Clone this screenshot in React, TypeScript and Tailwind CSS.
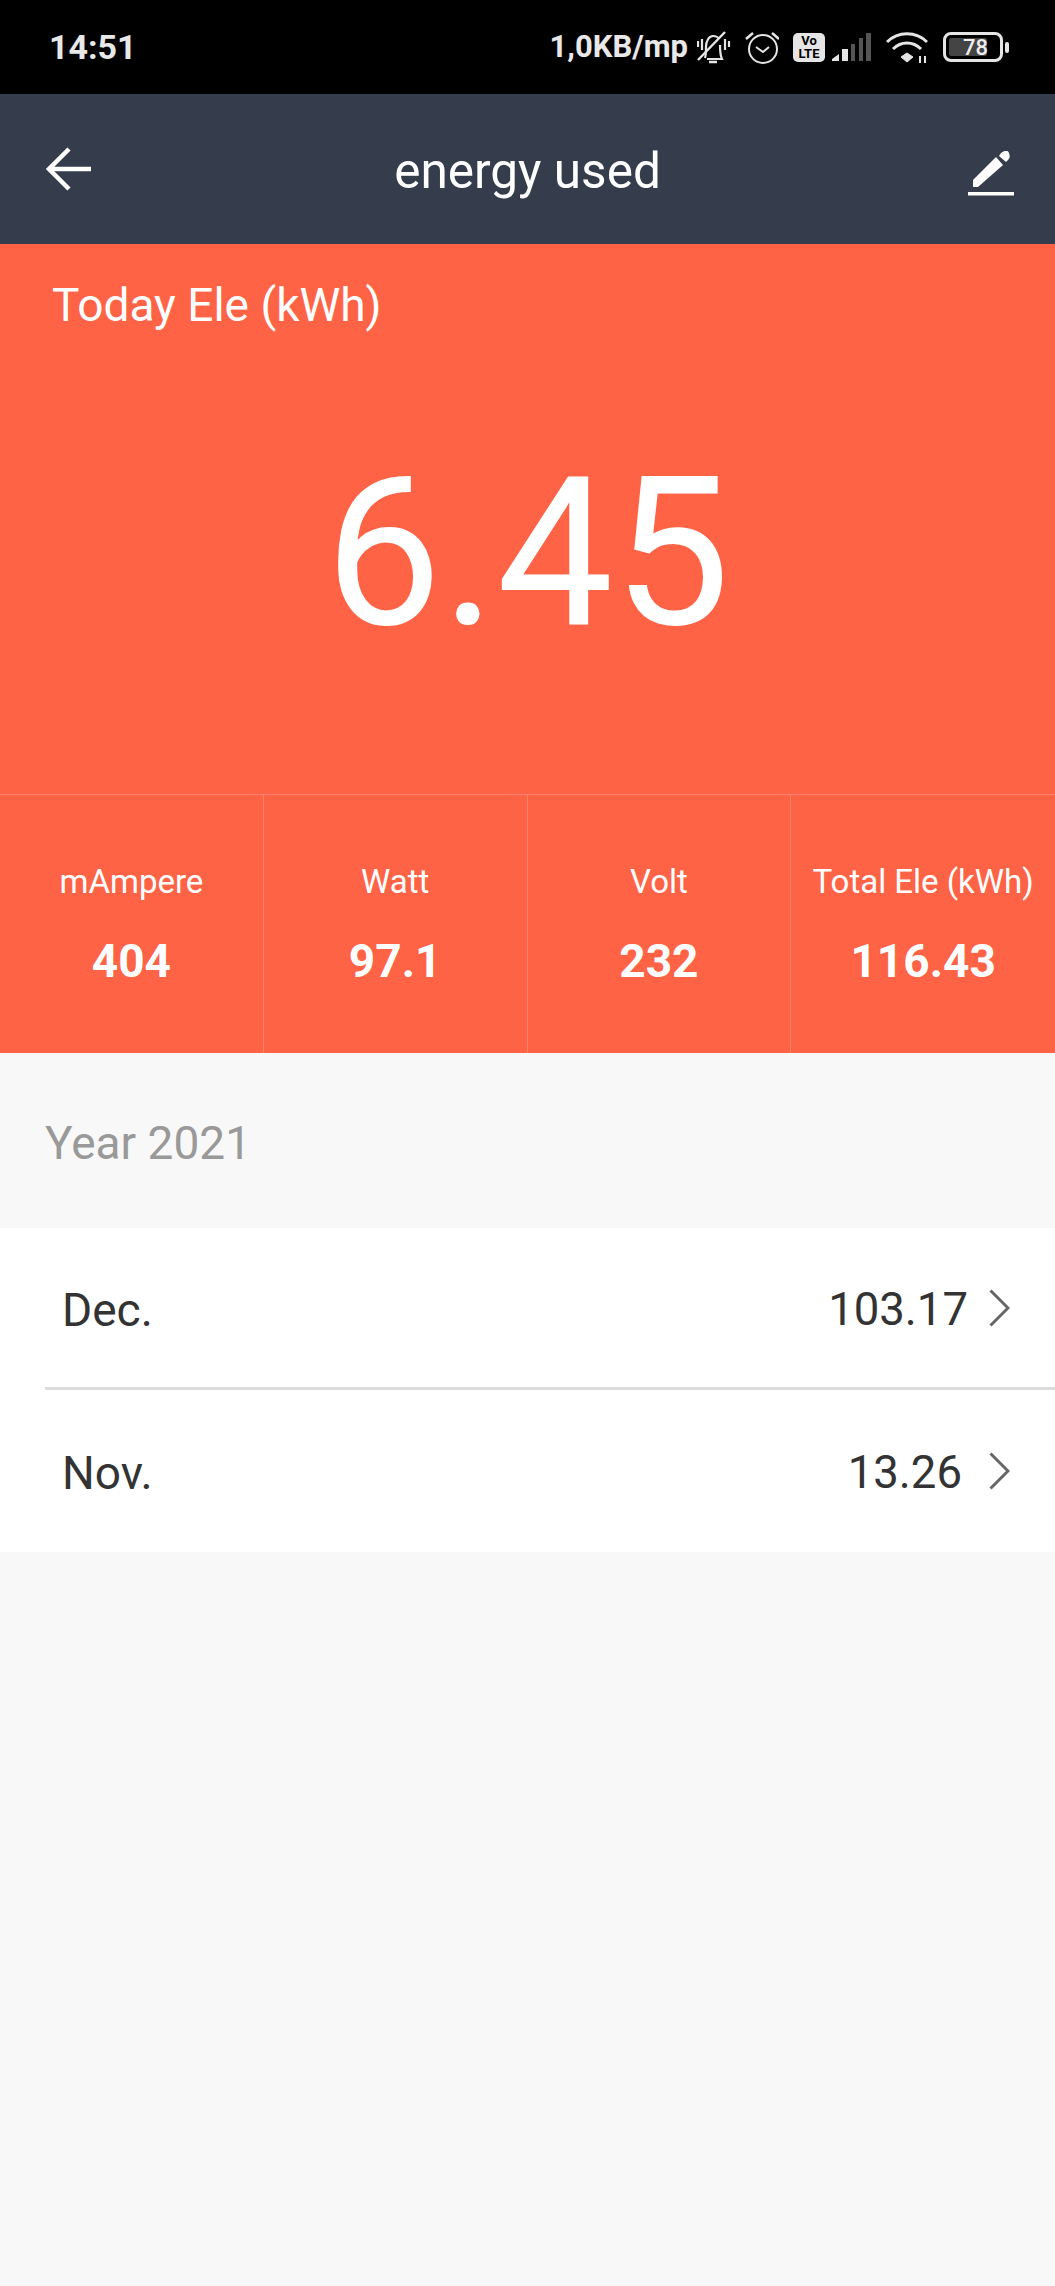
import React from 'react';

const stats = [
  { label: 'mAmpere', value: '404' },
  { label: 'Watt', value: '97.1' },
  { label: 'Volt', value: '232' },
  { label: 'Total Ele (kWh)', value: '116.43' },
];

const months = [
  { name: 'Dec.', value: '103.17', valueClass: 'mr-[21px]' },
  { name: 'Nov.', value: '13.26', valueClass: 'mr-[27px]' },
];

const BellOff = () => (
  <svg width="34" height="33" viewBox="0 0 34 33" fill="none" stroke="#e5e5e5" strokeWidth="2.2">
    <path d="M8 27c1-3 1-7 1-11 0-6 3-11 7-11 3 0 5 1 6 3M23 14c0 5 0 10 2 14H10" />
    <path d="M12 31h8" strokeWidth="2.5" />
    <path d="M1 29 28 1" strokeWidth="2.4" />
    <path d="M5 8v11M1 10v6M28 8v11M32 10v6" />
  </svg>
);

const Alarm = () => (
  <svg width="34" height="33" viewBox="0 0 34 33" fill="none" stroke="#e5e5e5" strokeWidth="2">
    <circle cx="18" cy="18" r="14" />
    <path d="M11 16l7 5 6-5" />
    <path d="M1 8l7-6M27 2l7 6" strokeWidth="2.5" />
  </svg>
);

const Signal = () => (
  <svg width="39" height="28" viewBox="0 0 39 28">
    <path d="M0 28v-2l7-5v7z" fill="#e5e5e5" />
    <rect x="10" y="16" width="6" height="12" fill="#e5e5e5" />
    <rect x="19" y="11" width="4" height="17" fill="#555" />
    <rect x="27" y="5" width="4" height="23" fill="#555" />
    <rect x="34" y="0" width="5" height="28" fill="#555" />
  </svg>
);

const Wifi = () => (
  <svg width="42" height="32" viewBox="0 0 42 32" fill="none" stroke="#e5e5e5" strokeWidth="3">
    <path d="M1 11c11-11 29-11 40 0" />
    <path d="M7 18c8-8 20-8 28 0" />
    <path d="M15 26l6-4 6 4-6 5z" fill="#e5e5e5" strokeWidth="1" />
    <path d="M34 25v7M39 25v7" strokeWidth="2" />
  </svg>
);

const BackArrow = () => (
  <svg width="48" height="48" viewBox="0 0 48 48" fill="none" stroke="white" strokeWidth="4.5">
    <path d="M47 24H5" />
    <path d="M25 4 5 24l20 20" />
  </svg>
);

const EditIcon = () => (
  <svg width="46" height="46" viewBox="0 0 46 46" fill="white">
    <path d="M5 29 28 6l7 8-25 22H5z" />
    <path d="M31 5l2-3c4-3 7-3 8 0s1 5-1 7l-2 2z" />
    <rect x="0" y="41" width="46" height="3.5" />
  </svg>
);

const Chevron = () => (
  <svg width="21" height="38" viewBox="0 0 21 38" fill="none" stroke="#666666" strokeWidth="3">
    <path d="M1.5 1.5 19 19 1.5 36.5" />
  </svg>
);

export default function App() {
  return (
    <div className="flex min-h-[2286px] flex-col bg-[#f8f8f8] font-['Roboto',sans-serif]">
      <div className="flex h-[94px] items-center justify-between bg-black pl-[49px] pr-[46px]">
        <span className="text-[34px] font-bold text-[#e8e8e8]">14:51</span>
        <div className="flex items-center">
          <span className="mr-[9px] text-[31px] font-bold text-[#e8e8e8]">1,0KB/mp</span>
          <BellOff />
          <span className="ml-[14px]"><Alarm /></span>
          <div className="ml-[14px] flex h-[29px] w-[32px] flex-col items-center justify-center rounded-[5px] bg-[#e5e5e5] text-[13px] font-bold leading-[13px] text-black">
            <span>Vo</span>
            <span>LTE</span>
          </div>
          <span className="ml-[7px]"><Signal /></span>
          <span className="ml-[15px]"><Wifi /></span>
          <div className="ml-[15px] flex h-[30px] w-[60px] items-center rounded-[8px] border-[3px] border-[#e5e5e5] p-[3px]">
            <div className="flex h-full w-[38px] shrink-0 items-center justify-end overflow-visible rounded-[2px] bg-[#444] text-[22px] font-medium text-[#eee]">
              <span className="-mr-[1px]">78</span>
            </div>
          </div>
          <div className="ml-[2px] h-[11px] w-[4px] rounded-full bg-[#e5e5e5]" />
        </div>
      </div>

      <div className="flex h-[150px] items-center bg-[#353d4d] pl-[44px] pr-[41px] text-white">
        <span className="-mr-[5px]"><BackArrow /></span>
        <span className="flex-1 pt-[5px] text-center text-[49.5px]">energy used</span>
        <span className="mt-[10px]"><EditIcon /></span>
      </div>

      <div className="bg-[#ff6345] text-white">
        <div className="flex h-[551px] flex-col border-b border-white/20">
          <div className="pl-[52px] pt-[36px] text-[46px] leading-[50px]">Today Ele (kWh)</div>
          <div className="flex flex-1 items-center justify-center pb-[18px] text-[208px] leading-none">6.45</div>
        </div>
        <div className="grid h-[258px] grid-cols-4">
          {stats.map((stat, i) => (
            <div
              key={stat.label}
              className={`flex flex-col items-center justify-center gap-[34px] ${i < 3 ? 'border-r border-white/20' : ''}`}
            >
              <span className="text-[33px] leading-[40px]">{stat.label}</span>
              <span className="text-[46px] font-bold leading-[50px]">{stat.value}</span>
            </div>
          ))}
        </div>
      </div>

      <div className="flex h-[175px] items-center pl-[45px] pt-[6px] text-[46px] text-[#999999]">Year 2021</div>

      <div className="bg-white text-[#333333]">
        {months.map((month, i) => (
          <div key={month.name} className="pl-[45px]">
            <div className={`flex h-[162px] items-center pr-[45px] ${i === 0 ? 'border-b-[3px] border-[#dcdcdc]' : ''}`}>
              <span className="pl-[17px] pt-[5px] text-[46px]">{month.name}</span>
              <span className={`ml-auto pt-[5px] text-[45.5px] ${month.valueClass}`}>{month.value}</span>
              <Chevron />
            </div>
          </div>
        ))}
      </div>
    </div>
  );
}
